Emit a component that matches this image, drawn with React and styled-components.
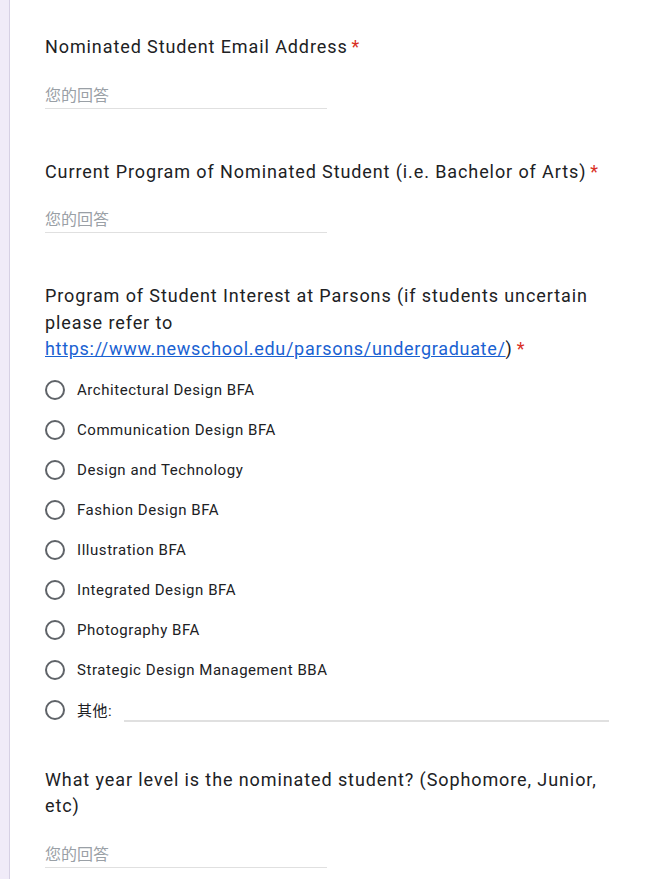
import styled, { createGlobalStyle } from 'styled-components';

const GlobalStyle = createGlobalStyle`
  html, body {
    margin: 0;
    padding: 0;
    background: #f0ebf8;
  }
  * {
    box-sizing: border-box;
  }
`;

const Page = styled.div`
  display: flex;
  min-height: 879px;
  padding-left: 9px;
  font-family: Roboto, "Noto Sans CJK SC", sans-serif;
  color: #202124;
`;

const Card = styled.div`
  flex: 1;
  background: #fff;
  border-left: 1px solid #d6d0e4;
  padding: 34px 41px 0 35px;
  display: flex;
  flex-direction: column;
  gap: 37px;
`;

const Question = styled.div`
  display: flex;
  flex-direction: column;
  padding-bottom: ${props => (props.$text ? '13px' : '0')};
`;

const Title = styled.div`
  font-size: 18px;
  line-height: 26.5px;
  font-weight: 400;
  letter-spacing: 0.9px;
`;

const Required = styled.span`
  color: #d93025;
  margin-left: 4px;
`;

const Link = styled.a`
  color: #1a62d2;
  text-decoration: underline;
  letter-spacing: 0.7px;
`;

const TextAnswer = styled.div`
  width: 282px;
  margin-top: 23px;
  font-size: 16px;
  line-height: 24px;
  color: #9aa0a6;
  border-bottom: 1px solid #e0e0e0;
`;

const Options = styled.div`
  display: flex;
  flex-direction: column;
  margin-top: 7px;
`;

const OptionRow = styled.label`
  display: flex;
  align-items: center;
  height: 40px;
  gap: 12px;
  font-size: 15px;
  letter-spacing: 0.55px;
`;

const Radio = styled.span`
  width: 20px;
  height: 20px;
  border: 2px solid #5f6368;
  border-radius: 50%;
  flex-shrink: 0;
`;

const OtherInput = styled.div`
  flex: 1;
  align-self: flex-end;
  margin: 0 0 8px 0;
  border-bottom: 2px solid #e0e0e0;
`;

const programs = [
  'Architectural Design BFA',
  'Communication Design BFA',
  'Design and Technology',
  'Fashion Design BFA',
  'Illustration BFA',
  'Integrated Design BFA',
  'Photography BFA',
  'Strategic Design Management BBA',
];

const App = () => {
  return (
    <>
      <GlobalStyle />
      <Page>
        <Card>
          <Question $text>
            <Title>
              Nominated Student Email Address<Required>*</Required>
            </Title>
            <TextAnswer>您的回答</TextAnswer>
          </Question>

          <Question $text>
            <Title>
              Current Program of Nominated Student (i.e. Bachelor of Arts)
              <Required>*</Required>
            </Title>
            <TextAnswer>您的回答</TextAnswer>
          </Question>

          <Question>
            <Title>
              Program of Student Interest at Parsons (if students uncertain please refer to{' '}
              <Link href="#">https://www.newschool.edu/parsons/undergraduate/</Link>)
              <Required>*</Required>
            </Title>
            <Options>
              {programs.map(p => (
                <OptionRow key={p}>
                  <Radio />
                  {p}
                </OptionRow>
              ))}
              <OptionRow>
                <Radio />
                其他:
                <OtherInput />
              </OptionRow>
            </Options>
          </Question>

          <Question $text>
            <Title>What year level is the nominated student? (Sophomore, Junior, etc)</Title>
            <TextAnswer>您的回答</TextAnswer>
          </Question>
        </Card>
      </Page>
    </>
  );
};

export default App;
